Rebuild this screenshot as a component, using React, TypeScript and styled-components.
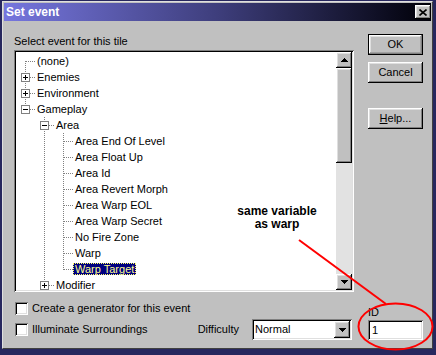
import React from 'react';
import styled, { createGlobalStyle } from 'styled-components';

const GlobalStyle = createGlobalStyle`
  html, body { margin: 0; padding: 0; background: #27275e; }
  body {
    font-family: "Liberation Sans", Arial, sans-serif;
    font-size: 11px;
    color: #000;
  }
  #root { width: 436px; height: 355px; overflow: hidden; position: relative; }
`;

const raised = `box-shadow: inset -1px -1px #000, inset 1px 1px #fff, inset -2px -2px #808080, inset 2px 2px #dfdfdf;`;
const sunken = `box-shadow: inset 1px 1px #808080, inset -1px -1px #fff, inset 2px 2px #000, inset -2px -2px #dfdfdf;`;

const Desktop = styled.div`
  position: relative;
  width: 436px;
  height: 355px;
  box-sizing: border-box;
  padding: 1px 3px 0 2px;
`;

const Window = styled.div`
  width: 431px;
  height: 348px;
  box-sizing: border-box;
  background: #c0c0c0;
  border-top: 1px solid #dfdfdf;
  border-left: 1px solid #dfdfdf;
  border-right: 1px solid #404040;
  border-bottom: 1px solid #404040;
  padding: 1px;
  display: flex;
  flex-direction: column;
`;

const TitleBar = styled.div`
  height: 18px;
  display: flex;
  align-items: center;
  justify-content: space-between;
  padding: 0 0 0 2px;
  background: linear-gradient(to right, #7676de 0%, #3e3e7c 50%, #000008 100%);
`;

const TitleText = styled.span`
  color: #fff;
  font-weight: bold;
  font-size: 12px;
  line-height: 18px;
`;

const CloseButton = styled.div`
  width: 16px;
  height: 14px;
  background: #c0c0c0;
  ${raised}
  display: flex;
  align-items: center;
  justify-content: center;
`;

const Content = styled.div`
  display: grid;
  grid-template-columns: 340px 55px;
  column-gap: 14px;
  padding: 13px 0 0 10px;
`;

const LeftTop = styled.div`
  display: flex;
  flex-direction: column;
`;

const FieldLabel = styled.div`
  line-height: 13px;
  margin-top: 1px;
  margin-bottom: 2px;
`;

const TreeBox = styled.div`
  height: 242px;
  box-sizing: border-box;
  background: #fff;
  ${sunken}
  padding: 2px;
  display: flex;
  overflow: hidden;
`;

const TreeRows = styled.div`
  flex: 1;
  padding-top: 1px;
  overflow: hidden;
`;

const Row = styled.div`
  height: 16px;
  display: flex;
  align-items: center;
`;

const CellSvg = styled.svg`
  display: block;
  flex: none;
`;

const NodeLabel = styled.span<{ $selected?: boolean }>`
  line-height: 10px;
  padding: 0 1px;
  white-space: nowrap;
  border: 1px dotted ${(p) => (p.$selected ? '#ffff60' : 'transparent')};
  background: ${(p) => (p.$selected ? '#000080' : 'transparent')};
  color: ${(p) => (p.$selected ? '#ffff90' : '#000')};
`;

const ScrollBar = styled.div`
  width: 16px;
  display: flex;
  flex-direction: column;
  background: #e2e2e2;
`;

const ScrollButton = styled.div`
  width: 16px;
  height: 16px;
  flex: none;
  background: #c0c0c0;
  ${raised}
  display: flex;
  align-items: center;
  justify-content: center;
`;

const Thumb = styled.div`
  height: 95px;
  flex: none;
  background: #c0c0c0;
  ${raised}
`;

const Track = styled.div`
  flex: 1;
`;

const ButtonColumn = styled.div`
  display: flex;
  flex-direction: column;
`;

const PushButton = styled.div<{ $default?: boolean; $gap: number }>`
  height: 21px;
  margin-top: ${(p) => p.$gap}px;
  box-sizing: border-box;
  background: #c0c0c0;
  display: flex;
  align-items: center;
  justify-content: center;
  line-height: 13px;
  ${(p) =>
    p.$default
      ? `border: 1px solid #000; box-shadow: inset -1px -1px #808080, inset 1px 1px #fff, inset -2px -2px #a0a0a0, inset 2px 2px #dfdfdf;`
      : raised}
`;

const LeftBottom = styled.div`
  padding-top: 10px;
  display: flex;
  flex-direction: column;
  gap: 4px;
`;

const OptionRow = styled.div<{ $tall?: boolean }>`
  height: ${(p) => (p.$tall ? 21 : 13)}px;
  display: flex;
  align-items: center;
`;

const CheckBox = styled.div`
  width: 13px;
  height: 13px;
  box-sizing: border-box;
  margin-left: 1px;
  margin-right: 4px;
  background: #fff;
  ${sunken}
  flex: none;
`;

const OptionText = styled.span`
  line-height: 13px;
  white-space: nowrap;
`;

const DifficultyGroup = styled.div`
  margin-left: auto;
  margin-right: 2px;
  display: flex;
  align-items: center;
  gap: 13px;
`;

const Select = styled.div`
  width: 100px;
  height: 21px;
  box-sizing: border-box;
  background: #fff;
  ${sunken}
  padding: 2px;
  display: flex;
  align-items: center;
`;

const SelectValue = styled.span`
  flex: 1;
  padding-left: 1px;
  line-height: 13px;
`;

const DropButton = styled.div`
  width: 16px;
  height: 17px;
  background: #c0c0c0;
  ${raised}
  display: flex;
  align-items: center;
  justify-content: center;
`;

const RightBottom = styled.div`
  padding-top: 14px;
  display: flex;
  flex-direction: column;
`;

const IdLabel = styled.div`
  line-height: 13px;
`;

const IdInput = styled.div`
  margin-top: 1px;
  height: 20px;
  box-sizing: border-box;
  background: #fff;
  ${sunken}
  padding: 0 2px 0 4px;
  display: flex;
  align-items: center;
  line-height: 13px;
`;

const Note = styled.div`
  position: absolute;
  left: 236px;
  top: 205px;
  width: 82px;
  text-align: center;
  font-weight: bold;
  font-size: 12px;
  line-height: 13px;
  white-space: nowrap;
`;

const Overlay = styled.svg`
  position: absolute;
  left: 0;
  top: 0;
  pointer-events: none;
`;

type CellKind = 'blank' | 'pipe' | 'tee' | 'elbow' | 'first';
type Cell = { k: CellKind; box?: 'plus' | 'minus' };
type Node = { cells: Cell[]; label: string; selected?: boolean };

const dash = { stroke: '#808080', strokeDasharray: '1 1', shapeRendering: 'crispEdges' as const };

const TreeCell: React.FC<Cell> = ({ k, box }) => (
  <CellSvg width="19" height="16" viewBox="0 0 19 16">
    {(k === 'pipe' || k === 'tee') && <line x1="9.5" y1="0" x2="9.5" y2="16" {...dash} />}
    {k === 'elbow' && <line x1="9.5" y1="0" x2="9.5" y2="9" {...dash} />}
    {k === 'first' && <line x1="9.5" y1="8" x2="9.5" y2="16" {...dash} />}
    {(k === 'tee' || k === 'elbow' || k === 'first') && (
      <line x1="10" y1="8.5" x2="19" y2="8.5" {...dash} />
    )}
    {box && (
      <g shapeRendering="crispEdges">
        <rect x="5.5" y="4.5" width="8" height="8" fill="#fff" stroke="#808080" />
        <line x1="7" y1="8.5" x2="12" y2="8.5" stroke="#000" />
        {box === 'plus' && <line x1="9.5" y1="6" x2="9.5" y2="11" stroke="#000" />}
      </g>
    )}
  </CellSvg>
);

const leaf = (label: string, last = false, selected = false): Node => ({
  cells: [{ k: 'blank' }, { k: 'pipe' }, { k: last ? 'elbow' : 'tee' }],
  label,
  selected,
});

const nodes: Node[] = [
  { cells: [{ k: 'first' }], label: '(none)' },
  { cells: [{ k: 'tee', box: 'plus' }], label: 'Enemies' },
  { cells: [{ k: 'tee', box: 'plus' }], label: 'Environment' },
  { cells: [{ k: 'elbow', box: 'minus' }], label: 'Gameplay' },
  { cells: [{ k: 'blank' }, { k: 'tee', box: 'minus' }], label: 'Area' },
  leaf('Area End Of Level'),
  leaf('Area Float Up'),
  leaf('Area Id'),
  leaf('Area Revert Morph'),
  leaf('Area Warp EOL'),
  leaf('Area Warp Secret'),
  leaf('No Fire Zone'),
  leaf('Warp'),
  leaf('Warp Target', true, true),
  { cells: [{ k: 'blank' }, { k: 'tee', box: 'plus' }], label: 'Modifier' },
];

const ArrowUp = () => (
  <svg width="7" height="4" viewBox="0 0 7 4" shapeRendering="crispEdges">
    <polygon points="3.5,0 7,4 0,4" fill="#000" />
  </svg>
);

const ArrowDown = () => (
  <svg width="7" height="4" viewBox="0 0 7 4" shapeRendering="crispEdges">
    <polygon points="0,0 7,0 3.5,4" fill="#000" />
  </svg>
);

const CloseIcon = () => (
  <svg width="8" height="7" viewBox="0 0 8 7">
    <path d="M0.5 0.5 L7.5 6.5 M7.5 0.5 L0.5 6.5" stroke="#000" strokeWidth="1.6" />
  </svg>
);

export default function App() {
  return (
    <>
      <GlobalStyle />
      <Desktop>
        <Window>
          <TitleBar>
            <TitleText>Set event</TitleText>
            <CloseButton>
              <CloseIcon />
            </CloseButton>
          </TitleBar>
          <Content>
            <LeftTop>
              <FieldLabel>Select event for this tile</FieldLabel>
              <TreeBox>
                <TreeRows>
                  {nodes.map((n) => (
                    <Row key={n.label}>
                      {n.cells.map((c, i) => (
                        <TreeCell key={i} {...c} />
                      ))}
                      <NodeLabel $selected={n.selected}>{n.label}</NodeLabel>
                    </Row>
                  ))}
                </TreeRows>
                <ScrollBar>
                  <ScrollButton>
                    <ArrowUp />
                  </ScrollButton>
                  <Thumb />
                  <Track />
                  <ScrollButton>
                    <ArrowDown />
                  </ScrollButton>
                </ScrollBar>
              </TreeBox>
            </LeftTop>
            <ButtonColumn>
              <PushButton $default $gap={0}>OK</PushButton>
              <PushButton $gap={7}>Cancel</PushButton>
              <PushButton $gap={25}>
                <span>
                  <u>H</u>elp...
                </span>
              </PushButton>
            </ButtonColumn>
            <LeftBottom>
              <OptionRow>
                <CheckBox />
                <OptionText>Create a generator for this event</OptionText>
              </OptionRow>
              <OptionRow $tall>
                <CheckBox />
                <OptionText>Illuminate Surroundings</OptionText>
                <DifficultyGroup>
                  <OptionText>Difficulty</OptionText>
                  <Select>
                    <SelectValue>Normal</SelectValue>
                    <DropButton>
                      <ArrowDown />
                    </DropButton>
                  </Select>
                </DifficultyGroup>
              </OptionRow>
            </LeftBottom>
            <RightBottom>
              <IdLabel>ID</IdLabel>
              <IdInput>1</IdInput>
            </RightBottom>
          </Content>
        </Window>
        <Note>
          same variable
          <br />
          as warp
        </Note>
        <Overlay width="436" height="355" viewBox="0 0 436 355">
          <line x1="299" y1="240" x2="386" y2="304" stroke="#f00" strokeWidth="2" />
          <ellipse cx="395.5" cy="326.5" rx="37" ry="23" fill="none" stroke="#f00" strokeWidth="2" />
        </Overlay>
      </Desktop>
    </>
  );
}
